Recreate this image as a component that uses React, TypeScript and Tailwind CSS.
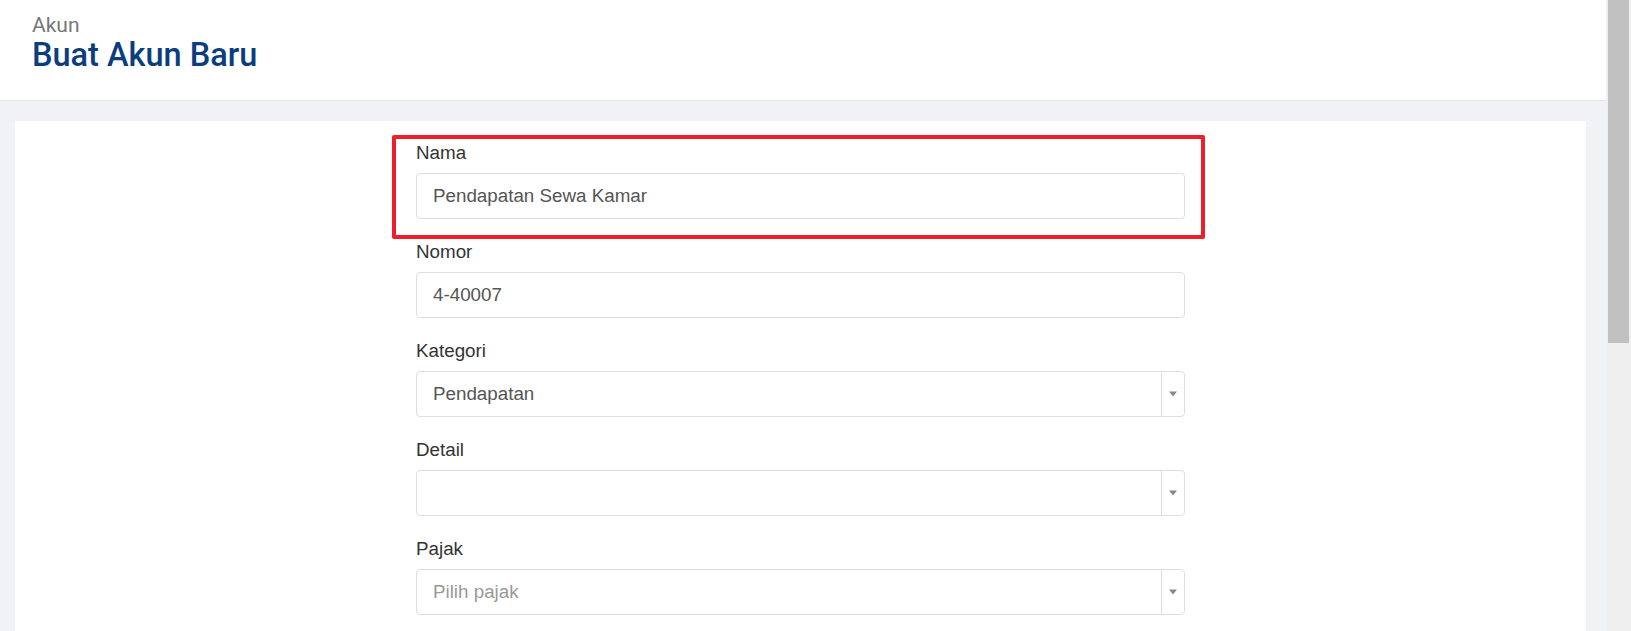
import React from "react";

const labelFont = { fontFamily: '"Liberation Sans", Arial, sans-serif' };

function Field({ label, children }: { label: string; children: React.ReactNode }) {
  return (
    <div className="mb-[21px]">
      <label className="block text-[18.8px] leading-6 text-[#333] mb-2">{label}</label>
      {children}
    </div>
  );
}

function TextInput({ value }: { value: string }) {
  return (
    <div className="h-[46px] rounded-[4px] border border-[#dedede] bg-white px-4 flex items-center text-[18.8px] text-[#555]">
      {value}
    </div>
  );
}

function SelectBox({ value, placeholder }: { value?: string; placeholder?: string }) {
  return (
    <div className="h-[46px] rounded-[4px] border border-[#dedede] bg-white flex items-stretch text-[18.8px]">
      <div className="flex-1 flex items-center px-4">
        {value ? <span className="text-[#555]">{value}</span> : <span className="text-[#999]">{placeholder}</span>}
      </div>
      <div className="w-[23px] border-l border-[#dedede] flex items-center justify-center">
        <svg width="8" height="6" viewBox="0 0 8 6">
          <path d="M0 0.5 H8 L4 5.5 Z" fill="#888" />
        </svg>
      </div>
    </div>
  );
}

export default function App() {
  return (
    <div className="h-[631px] overflow-hidden flex bg-[#f1f2f6]">
      <div className="flex-1 flex flex-col min-w-0">
        {/* header */}
        <div className="h-[101px] shrink-0 bg-white border-b border-[#e3e6ea] pl-8 pt-[13px]" style={{ fontFamily: "Roboto, sans-serif" }}>
          <div className="text-[21px] leading-6 text-[#777]">Akun</div>
          <h1 className="text-[32.5px] leading-9 font-medium text-[#0c3d7d]">Buat Akun Baru</h1>
        </div>

        {/* form card */}
        <div className="flex-1 min-h-0 pl-[15px] pr-5 pt-5">
          <div className="h-full bg-white pt-5" style={labelFont}>
            <div className="w-[769px] mx-auto">
              <div className="relative">
                <Field label="Nama">
                  <TextInput value="Pendapatan Sewa Kamar" />
                </Field>
                <div className="absolute -left-6 -right-5 -top-[6px] -bottom-5 border-[4.5px] border-[#ee1f28] rounded-[2px] pointer-events-none" />
              </div>
              <Field label="Nomor">
                <TextInput value="4-40007" />
              </Field>
              <Field label="Kategori">
                <SelectBox value="Pendapatan" />
              </Field>
              <Field label="Detail">
                <SelectBox />
              </Field>
              <Field label="Pajak">
                <SelectBox placeholder="Pilih pajak" />
              </Field>
            </div>
          </div>
        </div>
      </div>

      {/* scrollbar */}
      <div className="w-[25px] bg-[#efefef] pl-[2px] pr-[2px] shrink-0">
        <div className="h-[343px] bg-[#c1c1c1]" />
      </div>
    </div>
  );
}
